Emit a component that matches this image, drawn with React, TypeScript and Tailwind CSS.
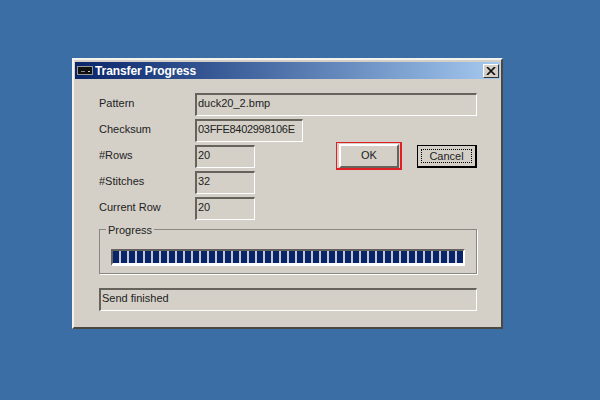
const font = { fontFamily: '"Liberation Sans", Arial, sans-serif' };

const chunks = Array.from({ length: 44 });

function Field({ text, className, tight }: { text: string; className: string; tight?: boolean }) {
  return (
    <div
      className={`flex h-[23px] items-center border-t-2 border-l-2 border-r border-b border-t-[#66635d] border-l-[#66635d] border-r-white border-b-white pb-[3px] pl-[1px] text-[11px] text-[#222] ${tight ? "tracking-[-0.3px]" : ""} ${className}`}
    >
      {text}
    </div>
  );
}

function Row({ label, text, width, tight }: { label: string; text: string; width: string; tight?: boolean }) {
  return (
    <div className="flex items-center">
      <div className="w-24 pb-[3px] text-[11px] text-[#222]">{label}</div>
      <Field text={text} className={width} tight={tight} />
    </div>
  );
}

function OkButton() {
  return (
    <div className="flex h-[24px] w-[60px] items-center justify-center border-2 border-t-white border-l-white border-r-[#66635d] border-b-[#66635d] bg-[#d4d0c8] pb-[1px] text-[11px] text-[#222]">
      OK
    </div>
  );
}

function CancelButton() {
  return (
    <div className="h-[23px] w-[60px] border border-r-2 border-b-2 border-black bg-[#d4d0c8] p-[3px]">
      <div className="flex h-full items-center justify-center border border-dotted border-black text-[11px] text-[#222]">
        Cancel
      </div>
    </div>
  );
}

export default function App() {
  return (
    <div className="h-[400px] w-[600px] overflow-hidden bg-[#3a6ea5] pl-[72px] pt-[58px]" style={font}>
      <div className="h-[271px] w-[431px] border-2 border-t-[#f4f2ec] border-l-[#f4f2ec] border-r-[#4a4843] border-b-[#4a4843] bg-[#d4d0c8] p-[1px] pt-[2px]">
        {/* title bar */}
        <div className="flex h-[17px] w-[425px] items-center bg-gradient-to-r from-[#0a246a] to-[#a6caf0] pl-[2px] pr-[1px]">
          <svg width="16" height="9" viewBox="0 0 16 9" className="shrink-0">
            <rect x="0" y="0" width="16" height="9" fill="#9a9a94" />
            <rect x="1" y="1" width="14" height="7" fill="#111" />
            <rect x="4" y="5" width="4" height="1" fill="#888" />
            <rect x="11" y="5" width="2" height="1" fill="#ccc" />
          </svg>
          <span className="ml-[2px] text-[12px] font-bold tracking-[-0.1px] text-white">Transfer Progress</span>
          <div className="ml-auto flex h-[14px] w-[16px] items-center justify-center border border-t-white border-l-white border-r-[#333] border-b-[#333] bg-[#d4d0c8]">
            <svg width="10" height="8" viewBox="0 0 10 8">
              <path d="M1 0 L9 8 M9 0 L1 8" stroke="#111" strokeWidth="1.7" />
            </svg>
          </div>
        </div>

        <div className="pl-6 pt-[14px]">
          <Row label="Pattern" text="duck20_2.bmp" width="w-[282px]" />
          <div className="mt-[3px] flex items-start">
            <div className="flex flex-col gap-[3px]">
              <Row label="Checksum" text="03FFE8402998106E" width="w-[108px]" tight />
              <Row label="#Rows" text="20" width="w-[60px]" />
              <Row label="#Stitches" text="32" width="w-[60px]" />
              <Row label="Current Row" text="20" width="w-[60px]" />
            </div>
            <div className="ml-[33px] mt-[23px] border border-r-2 border-b-2 border-[#e01f24] pl-[2px] pr-[1px] pt-[1px]">
              <OkButton />
            </div>
            <div className="ml-[15px] mt-[26px]">
              <CancelButton />
            </div>
          </div>

          {/* progress group */}
          <div className="relative mt-[9px] h-[45px] w-[378px] border border-[#8a8780] pl-[11px] pt-[19px] shadow-[1px_1px_0_#fff]">
            <span className="absolute -top-[7px] left-[6px] bg-[#d4d0c8] px-[2px] text-[11px] leading-[14px] text-[#222]">
              Progress
            </span>
            <div className="flex h-[17px] w-[354px] gap-[2px] border-t-2 border-l-2 border-r-2 border-b-[3px] border-t-[#66635d] border-l-[#66635d] border-r-white border-b-white bg-[#c4c8d0]">
              {chunks.map((_, i) => (
                <div key={i} className="h-[12px] w-[6px] shrink-0 bg-[#0a246a]" />
              ))}
            </div>
          </div>

          <Field text="Send finished" className="mt-[14px] w-[378px]" />
        </div>
      </div>
    </div>
  );
}
